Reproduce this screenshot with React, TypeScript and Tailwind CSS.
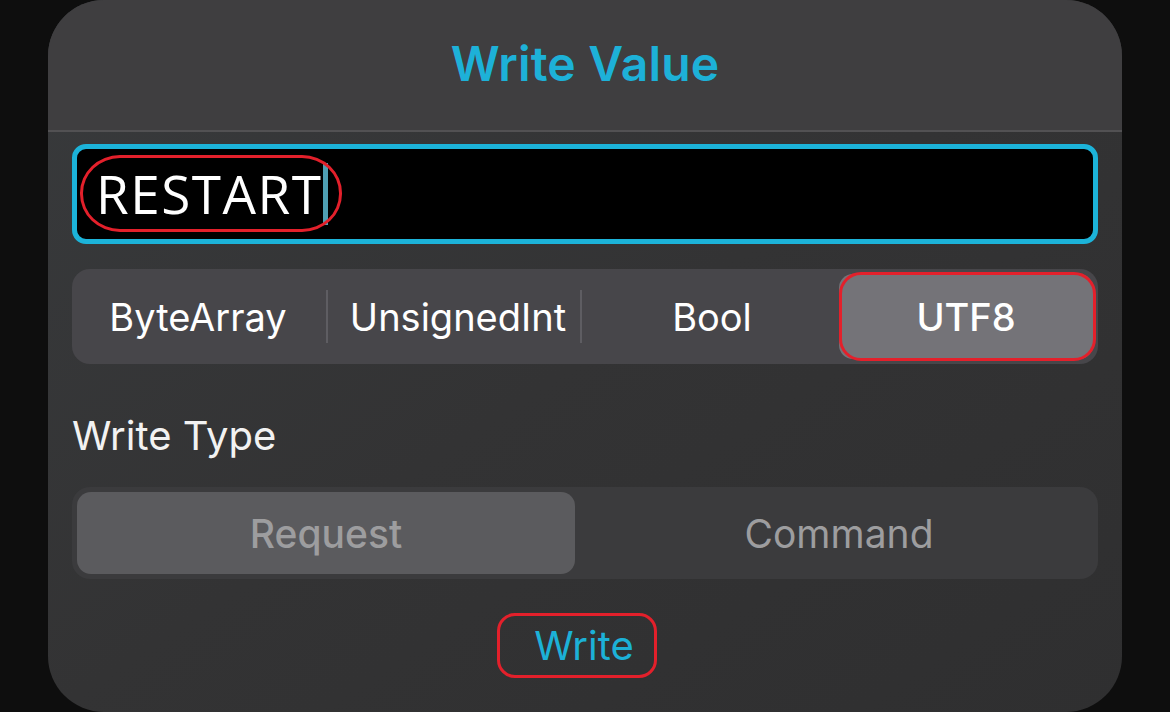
import React from "react";

const formats = ["ByteArray", "UnsignedInt", "Bool", "UTF8"];

export default function App() {
  const selected = "UTF8";

  return (
    <main className="w-[1170px] h-[712px] bg-[#0e0e0e] flex justify-center overflow-hidden font-['Inter',sans-serif]">
      {/* --- DIALOG --- */}
      <div className="w-[1074px] h-[712px] rounded-[56px] overflow-hidden flex flex-col bg-gradient-to-br from-[#383a3c] via-[#333334] to-[#2f2f30]">
        {/* Header */}
        <div className="h-[132px] shrink-0 bg-[#3f3e40] border-b-2 border-[#525153] flex items-center justify-center">
          <h1 className="text-[48px] font-semibold text-[#1db1d8] leading-none tracking-[0.2px] pb-[2px]">
            Write Value
          </h1>
        </div>

        <div className="px-[24px] pt-[12px] flex flex-col">
          {/* Value input */}
          <div className="relative h-[100px] rounded-[14px] border-[5px] border-[#1cb3d9] bg-black flex items-center pl-[19px]">
            <span className="text-[53px] leading-none text-white font-['Open_Sans',sans-serif] tracking-[1.5px] pb-[2px]">
              RESTART
            </span>
            <span className="w-[5px] h-[62px] bg-[#4f9fb3] ml-[1px]" />
            {/* annotation ring */}
            <span className="absolute left-[3px] top-[6px] w-[262px] h-[77px] border-[3px] border-[#e3202b] rounded-[40px/38px] pointer-events-none" />
          </div>

          {/* Format segmented control */}
          <div className="mt-[25px] h-[95px] rounded-[18px] bg-[#47464a] p-[5px] grid grid-cols-4">
            {formats.map((f, i) => {
              const active = f === selected;
              const showDivider = i > 0 && i < 3 && formats[i - 1] !== selected;
              return (
                <div key={f} className="relative flex items-center justify-center">
                  {showDivider && (
                    <span className="absolute left-[-5px] top-[16px] bottom-[16px] w-[2px] bg-[#5e5d62]" />
                  )}
                  {active ? (
                    <div className="relative w-full h-full rounded-[14px] bg-[#747378] flex items-center justify-center">
                      <span className="text-[38px] font-medium text-white leading-none">{f}</span>
                      <span className="absolute inset-[-2px_-3px_-2px_0px] border-[3px] border-[#e3202b] rounded-[22px] pointer-events-none" />
                    </div>
                  ) : (
                    <span className={`text-[38px] text-white leading-none ${i === 0 ? "mr-[12px]" : ""}`}>{f}</span>
                  )}
                </div>
              );
            })}
          </div>

          {/* Write type */}
          <div className="mt-[52px] text-[40px] text-[#f2f2f2] leading-none">Write Type</div>

          <div className="mt-[31px] h-[92px] rounded-[18px] bg-[#3b3b3d] p-[5px] grid grid-cols-[498px_1fr]">
            <div className="rounded-[14px] bg-[#5b5b5e] flex items-center justify-center">
              <span className="text-[39px] font-medium text-[#9d9d9f] leading-none">Request</span>
            </div>
            <div className="flex items-center justify-center pl-[10px]">
              <span className="text-[39px] text-[#9d9d9f] leading-none">Command</span>
            </div>
          </div>

          {/* Write action */}
          <div className="mt-[34px] flex justify-center pr-[16px]">
            <button className="relative w-[160px] h-[65px] flex items-center justify-center text-[40px] text-[#1cb1d7] leading-none pl-[14px]">
              Write
              <span className="absolute inset-0 border-[3px] border-[#e3202b] rounded-[18px] pointer-events-none" />
            </button>
          </div>
        </div>
      </div>
    </main>
  );
}
